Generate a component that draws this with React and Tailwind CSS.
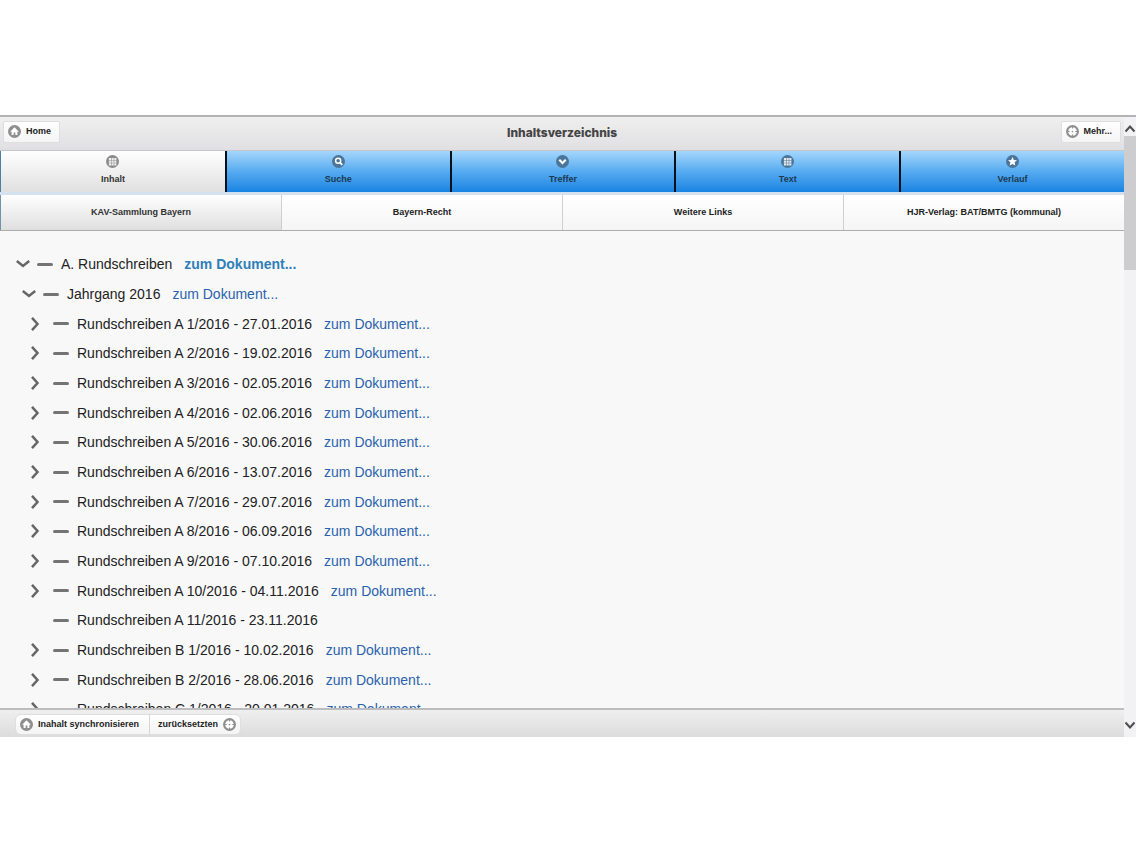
import React, { useState } from "react";

const TABS = [
  { label: "Inhalt", icon: "grid" },
  { label: "Suche", icon: "search" },
  { label: "Treffer", icon: "down" },
  { label: "Text", icon: "grid" },
  { label: "Verlauf", icon: "star" },
];

const COLLECTIONS = [
  "KAV-Sammlung Bayern",
  "Bayern-Recht",
  "Weitere Links",
  "HJR-Verlag: BAT/BMTG (kommunal)",
];

const ENTRIES = [
  { title: "A. Rundschreiben", level: 0, open: true, link: true },
  { title: "Jahrgang 2016", level: 1, open: true, link: true },
  { title: "Rundschreiben A 1/2016 - 27.01.2016", level: 2, link: true },
  { title: "Rundschreiben A 2/2016 - 19.02.2016", level: 2, link: true },
  { title: "Rundschreiben A 3/2016 - 02.05.2016", level: 2, link: true },
  { title: "Rundschreiben A 4/2016 - 02.06.2016", level: 2, link: true },
  { title: "Rundschreiben A 5/2016 - 30.06.2016", level: 2, link: true },
  { title: "Rundschreiben A 6/2016 - 13.07.2016", level: 2, link: true },
  { title: "Rundschreiben A 7/2016 - 29.07.2016", level: 2, link: true },
  { title: "Rundschreiben A 8/2016 - 06.09.2016", level: 2, link: true },
  { title: "Rundschreiben A 9/2016 - 07.10.2016", level: 2, link: true },
  { title: "Rundschreiben A 10/2016 - 04.11.2016", level: 2, link: true },
  { title: "Rundschreiben A 11/2016 - 23.11.2016", level: 2, link: false },
  { title: "Rundschreiben B 1/2016 - 10.02.2016", level: 2, link: true },
  { title: "Rundschreiben B 2/2016 - 28.06.2016", level: 2, link: true },
  { title: "Rundschreiben C 1/2016 - 20.01.2016", level: 2, link: true },
];

const INDENT = ["pl-4", "pl-[22px]", "pl-7"];

// White glyphs on a round disc
const GLYPHS = {
  home: <path d="M9 3 3 9.500h2V14h2.800v-3.500h2.400V14H13V9.500h2z" fill="#fff" />,
  gear: (
    <>
      <circle cx="9" cy="9" r="6" fill="#fff" />
      <path d="M9 2v3M9 13v3M2 9h3M13 9h3" stroke="currentColor" strokeWidth="1.500" />
      <circle cx="9" cy="9" r="1.200" fill="currentColor" />
    </>
  ),
  grid: (
    <path
      d="M4 4h3v3H4zM7.700 4h3v3h-3zM11.400 4h3v3h-3zM4 7.700h3v3H4zM7.700 7.700h3v3h-3zM11.400 7.700h3v3h-3zM4 11.400h3v3H4zM7.700 11.400h3v3h-3zM11.400 11.400h3v3h-3z"
      fill="#fff"
      fillOpacity="0.850"
    />
  ),
  search: (
    <>
      <circle cx="8.500" cy="8" r="3.500" fill="none" stroke="#fff" strokeWidth="2" />
      <path d="m11 10.500 3.200 3.200" stroke="#fff" strokeWidth="2.600" />
    </>
  ),
  down: <path d="m4.500 6.500 4.500 4.500 4.500-4.500" fill="none" stroke="#fff" strokeWidth="3" />,
  star: (
    <path
      d="m9 2.800 1.800 4 4.400.4-3.300 3 1 4.400L9 12.300l-3.900 2.300 1-4.400-3.300-3 4.400-.4z"
      fill="#fff"
    />
  ),
};

function DiscIcon({ name, className }) {
  return (
    <svg viewBox="0 0 18 18" className={`size-[13px] shrink-0 ${className}`} aria-hidden="true">
      <circle cx="9" cy="9" r="9" fill="currentColor" />
      {GLYPHS[name]}
    </svg>
  );
}

function Chevron({ open }) {
  return (
    <svg
      viewBox="0 0 14 14"
      className="size-[14px]"
      fill="none"
      stroke="#666"
      strokeWidth="2.500"
      aria-hidden="true"
    >
      {open ? <path d="m.8 4 6.200 5 6.200-5" /> : <path d="m4 .8 5.500 6.200-5.500 6.200" />}
    </svg>
  );
}

function ScrollArrow({ up }) {
  return (
    <svg
      viewBox="0 0 10 8"
      className="h-2 w-[10px]"
      fill="none"
      stroke="#4d4d4d"
      strokeWidth="2"
      aria-hidden="true"
    >
      {up ? <path d="m.5 6.500 4.500-5 4.500 5" /> : <path d="m.5 1.500 4.500 5 4.500-5" />}
    </svg>
  );
}

function Entry({ entry, open, onToggle }) {
  const isLeaf = !entry.link;
  return (
    <li className={`flex h-[30px] items-center nth-[3n]:h-[29px] ${INDENT[entry.level]}`}>
      <span className={entry.level === 2 ? "flex w-6" : "flex w-5"}>
        {!isLeaf && (
          <button type="button" aria-label={`${entry.title} umschalten`} onClick={onToggle}>
            <Chevron open={open} />
          </button>
        )}
      </span>
      <span className="ml-px mr-2 h-[3px] w-4 rounded-xs bg-[#747474]" />
      <span>{entry.title}</span>
      {entry.link && (
        <a
          href="#dokument"
          className={
            entry.level === 0
              ? "ml-3 font-bold text-[#2f7fb8]"
              : "ml-3 text-[#2a63ad]"
          }
        >
          zum Dokument...
        </a>
      )}
    </li>
  );
}

export default function App() {
  const [tab, setTab] = useState(0);
  const [collection, setCollection] = useState(0);
  const [toggled, setToggled] = useState({});

  const toggle = (idx) => setToggled((prev) => ({ ...prev, [idx]: !prev[idx] }));

  return (
    <div className="flex h-screen flex-col bg-white py-[115px] font-['Liberation_Sans',Arial,sans-serif] text-[#222]">
      <div className="flex min-h-0 flex-1 border-t-2 border-[#b3b3b3]">
        <div className="flex min-w-0 flex-1 flex-col bg-[#f8f8f9]">
          <header className="flex h-[34px] shrink-0 items-center justify-between border-b border-[#c4c8cc] bg-linear-to-b from-[#f0eff0] to-[#e0dfe1] px-[3px] pb-1 text-[9px] font-bold">
            <div className="flex flex-1">
              <button
                type="button"
                className="flex h-[22px] items-center gap-[5px] rounded-xs border border-[#dedede] bg-linear-to-b from-white to-[#f5f5f5] pl-1 pr-2"
              >
                <DiscIcon name="home" className="text-[#8f8f8f]" />
                Home
              </button>
            </div>
            <h1 className="pt-0.5 font-['Inter',sans-serif] text-xs font-extrabold text-[#444]">
              Inhaltsverzeichnis
            </h1>
            <div className="flex flex-1 justify-end">
              <button
                type="button"
                className="flex h-[22px] items-center gap-[5px] rounded-xs border border-[#dedede] bg-linear-to-b from-white to-[#f5f5f5] pl-1 pr-2"
              >
                <DiscIcon name="gear" className="text-[#8f8f8f]" />
                Mehr...
              </button>
            </div>
          </header>

          <nav className="grid shrink-0 grid-cols-5 text-[9px] font-bold">
            {TABS.map((item, idx) => (
              <button
                key={item.label}
                type="button"
                onClick={() => setTab(idx)}
                className={`flex h-[41px] flex-col items-center gap-[5px] pt-1 leading-3 ${
                  idx === 0 ? "border-l border-[#4f7f9f]" : "border-l-2 border-[#04101c]"
                } ${
                  tab === idx
                    ? "bg-linear-to-b from-white to-[#e0e0e0] text-[#333]"
                    : "bg-linear-to-b from-[#a4d6fb] via-[#55abf0] to-[#1583e3] text-[#1d3850]"
                }`}
              >
                <DiscIcon
                  name={item.icon}
                  className={tab === idx ? "text-[#8c8c8c]" : "text-[#4b7599]"}
                />
                {item.label}
              </button>
            ))}
          </nav>

          <nav className="grid shrink-0 grid-cols-4 border-t-3 border-b border-t-[#d5e1ee] border-b-[#adadad] text-[9px] font-bold">
            {COLLECTIONS.map((label, idx) => (
              <button
                key={label}
                type="button"
                onClick={() => setCollection(idx)}
                className={`h-[35px] border-l ${
                  idx === 0 ? "border-[#6f93a8]" : "border-[#cfcfd1]"
                } ${
                  collection === idx
                    ? "bg-linear-to-b from-white to-[#dfdfdf] text-[#333]"
                    : "bg-linear-to-b from-white to-[#f5f5f5]"
                }`}
              >
                {label}
              </button>
            ))}
          </nav>

          <main className="min-h-0 flex-1 overflow-hidden pt-[18px]">
            <ul className="text-sm">
              {ENTRIES.map((entry, idx) => (
                <Entry
                  key={entry.title}
                  entry={entry}
                  open={!!entry.open !== !!toggled[idx]}
                  onToggle={() => toggle(idx)}
                />
              ))}
            </ul>
          </main>

          <footer className="flex h-[29px] shrink-0 items-center border-t-2 border-[#bdbdbf] bg-linear-to-b from-[#efeff0] to-[#dcdcdd] px-[15px] pt-0.5 text-[9px] font-bold">
            <div className="flex h-[21px] overflow-hidden rounded-md border border-[#dedede] bg-linear-to-b from-white to-[#f4f4f4]">
              <button type="button" className="flex items-center gap-[5px] pl-1 pr-[10px]">
                <DiscIcon name="home" className="text-[#8f8f8f]" />
                Inahalt synchronisieren
              </button>
              <button
                type="button"
                className="flex items-center gap-[5px] border-l border-[#d6d6d6] pl-2 pr-1"
              >
                zurücksetzten
                <DiscIcon name="gear" className="text-[#8f8f8f]" />
              </button>
            </div>
          </footer>
        </div>

        {/* Scrollbar */}
        <aside className="flex w-3 shrink-0 flex-col bg-[#f2f1f3]">
          <button
            type="button"
            aria-label="Nach oben"
            className="flex h-[19px] items-center justify-center pt-1"
          >
            <ScrollArrow up />
          </button>
          <div className="flex-1">
            <div className="h-[134px] bg-[#cdccce]" />
          </div>
          <button
            type="button"
            aria-label="Nach unten"
            className="flex h-6 items-center justify-center"
          >
            <ScrollArrow />
          </button>
        </aside>
      </div>
    </div>
  );
}
